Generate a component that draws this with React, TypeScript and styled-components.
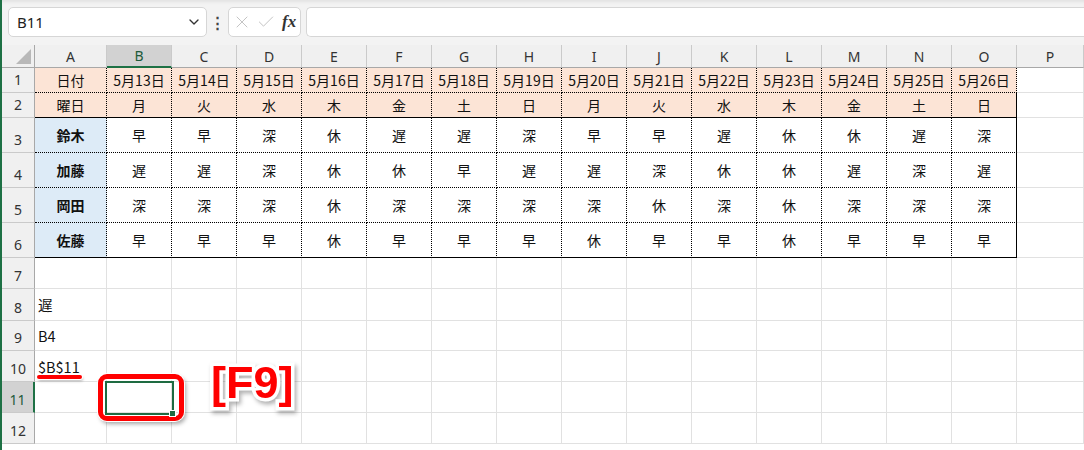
import styled, { createGlobalStyle } from "styled-components"
import { ChevronDown, X, Check } from "lucide-react"

const GlobalStyle = createGlobalStyle`
  html, body { margin: 0; padding: 0; background: #fff; }
  body { font-family: "Noto Sans", "Noto Sans CJK JP", sans-serif; overflow: hidden; }
`

type Line = "grid" | "dot" | "solid" | "none"

const line = (l?: Line) => {
  if (l === "dot") return "1px dotted #000"
  if (l === "solid") return "1px solid #000"
  if (l === "none") return "none"
  return "1px solid #e1e1e1"
}

const Page = styled.div`
  width: 1084px;
  height: 450px;
  border-left: 2px solid #1e7145;
  box-sizing: border-box;
  overflow: hidden;
  background: #fff;
`

const Toolbar = styled.div`
  height: 45px;
  background: #f3f3f3;
  box-shadow: inset 0 4px 3px -2px #e2e2e2;
  display: flex;
  align-items: flex-start;
  padding: 7px 0 0 6px;
  box-sizing: border-box;
`

const NameBox = styled.div`
  width: 199px;
  height: 30px;
  background: #fff;
  border: 1px solid #d6d6d6;
  border-radius: 5px;
  box-sizing: border-box;
  display: flex;
  align-items: center;
  justify-content: space-between;
  padding: 0 4px 0 8px;
  font-family: "Noto Sans", sans-serif;
  font-size: 15px;
  color: #222;
`

const Dots = styled.div`
  width: 21px;
  height: 30px;
  display: flex;
  align-items: center;
  justify-content: center;
  color: #444;
  font-size: 15px;
  font-weight: bold;
`

const FxBox = styled.div`
  width: 73px;
  height: 30px;
  background: #fff;
  border: 1px solid #d6d6d6;
  border-radius: 5px;
  box-sizing: border-box;
  display: flex;
  align-items: center;
  gap: 4px;
  padding: 0 0 0 3px;
  color: #c4c4c4;
`

const Fx = styled.span`
  font-family: "Liberation Serif", serif;
  font-style: italic;
  font-weight: bold;
  font-size: 17px;
  color: #333;
  margin-left: 2px;
`

const Formula = styled.div`
  flex: 1;
  height: 30px;
  margin-left: 5px;
  background: #fff;
  border: 1px solid #d6d6d6;
  border-right: none;
  border-radius: 5px 0 0 5px;
  box-sizing: border-box;
`

const Sheet = styled.div`
  position: relative;
  display: grid;
  grid-template-columns: 33px 72px repeat(14, 65px) 1fr;
  grid-template-rows: 23px 25px 25px 35px 35px 35px 35px 31px 32px 30px 31px 31px 31px;
`

const Corner = styled.div`
  background: #f0f0f0;
  border-right: 1px solid #a8a8a8;
  border-bottom: 1px solid #a8a8a8;
  box-sizing: border-box;
  position: relative;
  &::after {
    content: "";
    position: absolute;
    right: 3px;
    bottom: 3px;
    border-left: 15px solid transparent;
    border-bottom: 15px solid #b8b8b8;
  }
`

const ColHead = styled.div<{ $sel?: boolean }>`
  background: ${p => (p.$sel ? "#d2d2d2" : "#f0f0f0")};
  border-right: 1px solid #cacaca;
  border-bottom: ${p => (p.$sel ? "2px solid #1e7145" : "1px solid #a8a8a8")};
  box-sizing: border-box;
  display: flex;
  align-items: center;
  justify-content: center;
  font-family: "Noto Sans", sans-serif;
  font-size: 14px;
  color: ${p => (p.$sel ? "#1d5a3a" : "#333")};
`

const RowHead = styled.div<{ $sel?: boolean }>`
  background: ${p => (p.$sel ? "#d2d2d2" : "#f0f0f0")};
  border-right: ${p => (p.$sel ? "2px solid #1e7145" : "1px solid #a8a8a8")};
  border-bottom: 1px solid #cacaca;
  box-sizing: border-box;
  display: flex;
  align-items: flex-end;
  justify-content: center;
  padding-bottom: 3px;
  font-family: "Noto Sans", sans-serif;
  font-size: 14px;
  color: ${p => (p.$sel ? "#1d5a3a" : "#333")};
`

const Cell = styled.div<{ $bg?: string; $right?: Line; $bottom?: Line; $bold?: boolean; $left?: boolean }>`
  background: ${p => p.$bg || "#fff"};
  border-right: ${p => line(p.$right)};
  border-bottom: ${p => line(p.$bottom)};
  box-sizing: border-box;
  display: flex;
  align-items: center;
  justify-content: ${p => (p.$left ? "flex-start" : "center")};
  padding: ${p => (p.$left ? "0 0 0 3px" : "0")};
  white-space: nowrap;
  overflow: visible;
  font-family: "Noto Sans CJK JP", "Noto Sans", sans-serif;
  font-size: ${p => (p.$left ? "14.5px" : "14px")};
  font-weight: ${p => (p.$bold ? 700 : 400)};
  color: #111;
`

const Underline = styled.div`
  position: absolute;
  left: 35px;
  top: 330px;
  width: 45px;
  height: 4px;
  border-radius: 2px;
  background: #ff0000;
  box-shadow: 0 0 0 1px #fff, 1px 2px 3px rgba(0, 0, 0, 0.3);
`

const RedBox = styled.div`
  position: absolute;
  left: 96px;
  top: 329px;
  width: 86px;
  height: 47px;
  box-sizing: border-box;
  border: 5px solid #ff0000;
  border-radius: 9px;
  box-shadow: 0 0 0 1px #fff, 2px 3px 4px rgba(0, 0, 0, 0.35), inset 0 0 0 1px #fff;
`

const Selection = styled.div`
  position: absolute;
  left: 103px;
  top: 336px;
  width: 69px;
  height: 34px;
  box-sizing: border-box;
  border: 2px solid #1e6b41;
  &::after {
    content: "";
    position: absolute;
    right: -4px;
    bottom: -4px;
    width: 5px;
    height: 5px;
    background: #1e6b41;
    border: 1px solid #fff;
  }
`

const KeyLabel = styled.div`
  position: absolute;
  left: 209px;
  top: 315px;
  font-family: "Liberation Sans", "Noto Sans", sans-serif;
  font-size: 45px;
  font-weight: 700;
  letter-spacing: 0;
  color: #ff0000;
  -webkit-text-stroke: 7px #fff;
  paint-order: stroke fill;
  filter: drop-shadow(2px 3px 2px rgba(0, 0, 0, 0.3));
  line-height: 1;
`

const letters = "ABCDEFGHIJKLMNOP".split("")
const dates = Array.from({ length: 14 }, (_, i) => `5月${13 + i}日`)
const days = "月火水木金土日月火水木金土日".split("")
const staff: [string, string][] = [
  ["鈴木", "早早深休遅遅深早早遅休休遅深"],
  ["加藤", "遅遅深休休早遅遅深休休遅深遅"],
  ["岡田", "深深深休深深深深休深休深深深"],
  ["佐藤", "早早早休早早早休早早休早早早"],
]

const PEACH = "#fce4d6"
const BLUE = "#ddebf7"

const App = () => {
  const tableRows: { label: string; cells: string[]; head: boolean }[] = [
    { label: "日付", cells: dates, head: true },
    { label: "曜日", cells: days, head: true },
    ...staff.map(([n, s]) => ({ label: n, cells: s.split(""), head: false })),
  ]
  const extra: Record<number, string> = { 8: "遅", 9: "B4", 10: "$B$11" }

  return (
    <Page>
      <GlobalStyle />
      <Toolbar>
        <NameBox>
          <span>B11</span>
          <ChevronDown size={16} strokeWidth={2} color="#333" />
        </NameBox>
        <Dots>⋮</Dots>
        <FxBox>
          <X size={20} strokeWidth={1.2} />
          <Check size={20} strokeWidth={1.2} />
          <Fx>fx</Fx>
        </FxBox>
        <Formula />
      </Toolbar>
      <Sheet>
        <Corner />
        {letters.map(l => (
          <ColHead key={l} $sel={l === "B"}>{l}</ColHead>
        ))}

        {tableRows.map((r, ri) => {
          const bottom: Line = ri === 1 || ri === 5 ? "solid" : "dot"
          return [
            <RowHead key={`h${ri}`}>{ri + 1}</RowHead>,
            <Cell key={`a${ri}`} $bg={r.head ? PEACH : BLUE} $bold={!r.head} $right="dot" $bottom={bottom}>
              {r.label}
            </Cell>,
            ...r.cells.map((c, ci) => (
              <Cell
                key={`c${ri}-${ci}`}
                $bg={r.head ? PEACH : "#fff"}
                $right={ci === 13 && ri > 0 ? "solid" : "dot"}
                $bottom={bottom}
              >
                {c}
              </Cell>
            )),
            <Cell key={`p${ri}`} />,
          ]
        })}

        {[7, 8, 9, 10, 11, 12].map(n => [
          <RowHead key={`h${n}`} $sel={n === 11}>{n}</RowHead>,
          ...letters.map((l, i) => (
            <Cell key={`${l}${n}`} $left={i === 0}>
              {i === 0 ? extra[n] : null}
            </Cell>
          )),
        ])}

        <Underline />
        <RedBox />
        <Selection />
        <KeyLabel>[F9]</KeyLabel>
      </Sheet>
    </Page>
  )
}

export default App
